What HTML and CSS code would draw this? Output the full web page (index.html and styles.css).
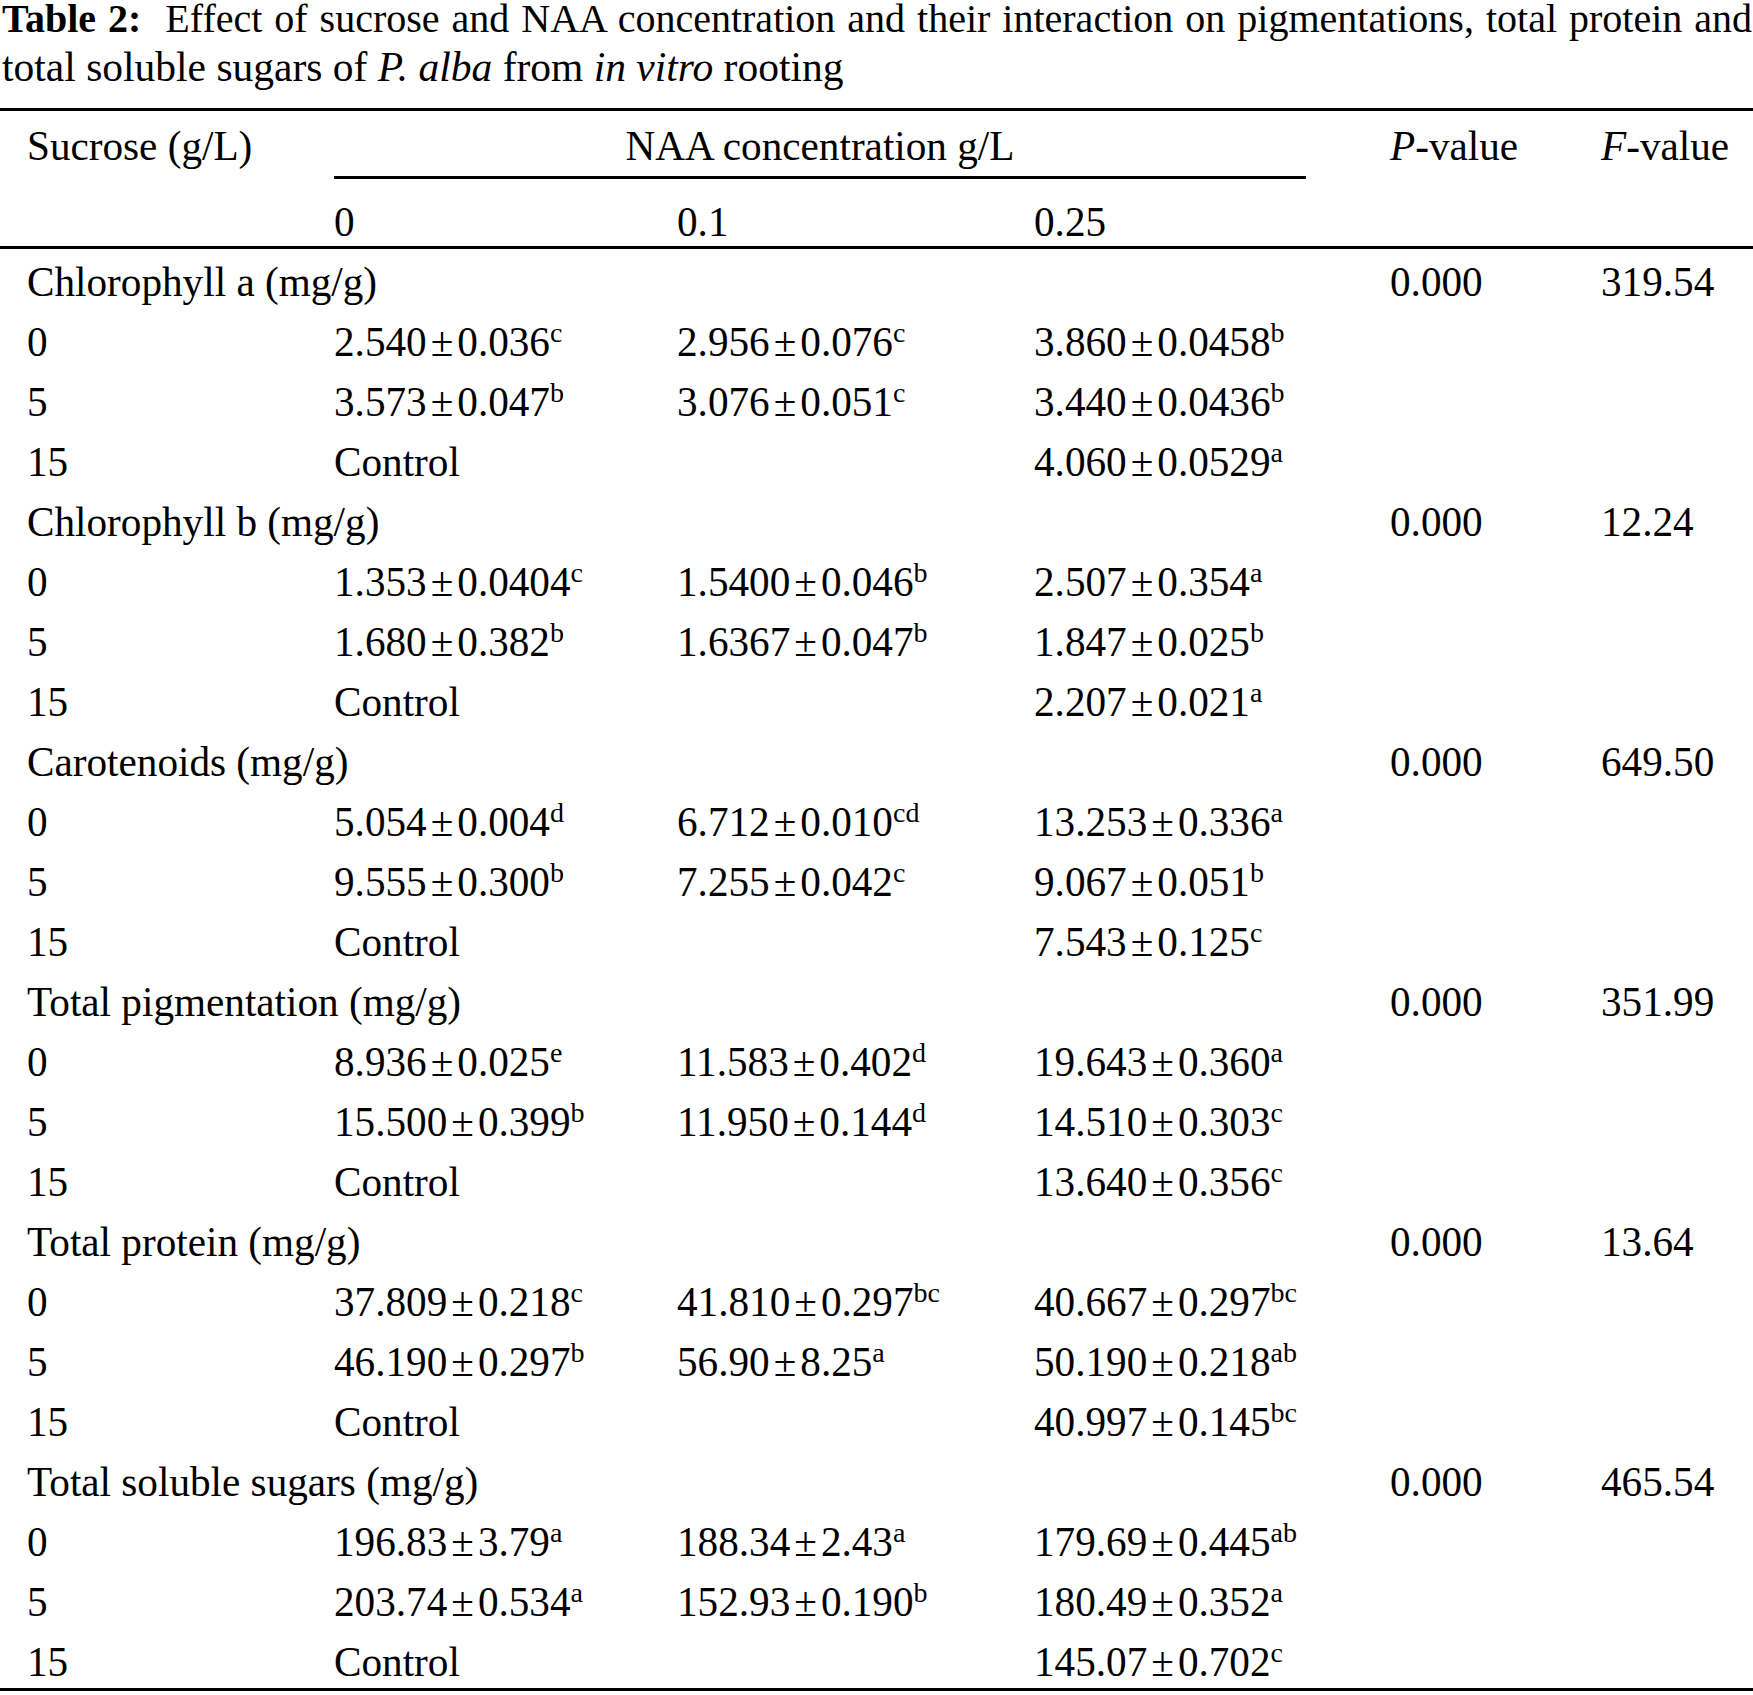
FILE: index.html
```html
<!DOCTYPE html>
<html lang="en">
<head>
<meta charset="utf-8">
<title>Table 2</title>
<link rel="stylesheet" href="styles.css">
</head>
<body>
<div class="page">
  <p class="caption"><span class="cap-line first"><b>Table 2:</b>&nbsp; Effect of sucrose and NAA concentration and their interaction on pigmentations, total protein and</span> <span class="cap-line second">total soluble sugars of <i>P. alba</i> from <i>in vitro</i> rooting</span></p>
  <table class="data">
    <colgroup>
      <col class="c0"><col class="c1"><col class="c2"><col class="c3"><col class="c4"><col class="c5">
    </colgroup>
    <thead>
      <tr class="h1">
        <th class="first-col">Sucrose (g/L)</th>
        <th colspan="3"><div class="naa">NAA concentration g/L</div></th>
        <th><i>P</i>-value</th>
        <th><i>F</i>-value</th>
      </tr>
      <tr class="h2">
        <th class="first-col"></th>
        <th>0</th>
        <th>0.1</th>
        <th>0.25</th>
        <th></th>
        <th></th>
      </tr>
    </thead>
    <tbody>
      <tr class="top"><td class="first-col" colspan="4">Chlorophyll a (mg/g)</td><td>0.000</td><td>319.54</td></tr>
      <tr><td class="first-col">0</td><td>2.540<span class="pm">±</span>0.036<sup>c</sup></td><td>2.956<span class="pm">±</span>0.076<sup>c</sup></td><td>3.860<span class="pm">±</span>0.0458<sup>b</sup></td><td></td><td></td></tr>
      <tr><td class="first-col">5</td><td>3.573<span class="pm">±</span>0.047<sup>b</sup></td><td>3.076<span class="pm">±</span>0.051<sup>c</sup></td><td>3.440<span class="pm">±</span>0.0436<sup>b</sup></td><td></td><td></td></tr>
      <tr><td class="first-col">15</td><td>Control</td><td></td><td>4.060<span class="pm">±</span>0.0529<sup>a</sup></td><td></td><td></td></tr>

      <tr><td class="first-col" colspan="4">Chlorophyll b (mg/g)</td><td>0.000</td><td>12.24</td></tr>
      <tr><td class="first-col">0</td><td>1.353<span class="pm">±</span>0.0404<sup>c</sup></td><td>1.5400<span class="pm">±</span>0.046<sup>b</sup></td><td>2.507<span class="pm">±</span>0.354<sup>a</sup></td><td></td><td></td></tr>
      <tr><td class="first-col">5</td><td>1.680<span class="pm">±</span>0.382<sup>b</sup></td><td>1.6367<span class="pm">±</span>0.047<sup>b</sup></td><td>1.847<span class="pm">±</span>0.025<sup>b</sup></td><td></td><td></td></tr>
      <tr><td class="first-col">15</td><td>Control</td><td></td><td>2.207<span class="pm">±</span>0.021<sup>a</sup></td><td></td><td></td></tr>

      <tr><td class="first-col" colspan="4">Carotenoids (mg/g)</td><td>0.000</td><td>649.50</td></tr>
      <tr><td class="first-col">0</td><td>5.054<span class="pm">±</span>0.004<sup>d</sup></td><td>6.712<span class="pm">±</span>0.010<sup>cd</sup></td><td>13.253<span class="pm">±</span>0.336<sup>a</sup></td><td></td><td></td></tr>
      <tr><td class="first-col">5</td><td>9.555<span class="pm">±</span>0.300<sup>b</sup></td><td>7.255<span class="pm">±</span>0.042<sup>c</sup></td><td>9.067<span class="pm">±</span>0.051<sup>b</sup></td><td></td><td></td></tr>
      <tr><td class="first-col">15</td><td>Control</td><td></td><td>7.543<span class="pm">±</span>0.125<sup>c</sup></td><td></td><td></td></tr>

      <tr><td class="first-col" colspan="4">Total pigmentation (mg/g)</td><td>0.000</td><td>351.99</td></tr>
      <tr><td class="first-col">0</td><td>8.936<span class="pm">±</span>0.025<sup>e</sup></td><td>11.583<span class="pm">±</span>0.402<sup>d</sup></td><td>19.643<span class="pm">±</span>0.360<sup>a</sup></td><td></td><td></td></tr>
      <tr><td class="first-col">5</td><td>15.500<span class="pm">±</span>0.399<sup>b</sup></td><td>11.950<span class="pm">±</span>0.144<sup>d</sup></td><td>14.510<span class="pm">±</span>0.303<sup>c</sup></td><td></td><td></td></tr>
      <tr><td class="first-col">15</td><td>Control</td><td></td><td>13.640<span class="pm">±</span>0.356<sup>c</sup></td><td></td><td></td></tr>

      <tr><td class="first-col" colspan="4">Total protein (mg/g)</td><td>0.000</td><td>13.64</td></tr>
      <tr><td class="first-col">0</td><td>37.809<span class="pm">±</span>0.218<sup>c</sup></td><td>41.810<span class="pm">±</span>0.297<sup>bc</sup></td><td>40.667<span class="pm">±</span>0.297<sup>bc</sup></td><td></td><td></td></tr>
      <tr><td class="first-col">5</td><td>46.190<span class="pm">±</span>0.297<sup>b</sup></td><td>56.90<span class="pm">±</span>8.25<sup>a</sup></td><td>50.190<span class="pm">±</span>0.218<sup>ab</sup></td><td></td><td></td></tr>
      <tr><td class="first-col">15</td><td>Control</td><td></td><td>40.997<span class="pm">±</span>0.145<sup>bc</sup></td><td></td><td></td></tr>

      <tr><td class="first-col" colspan="4">Total soluble sugars (mg/g)</td><td>0.000</td><td>465.54</td></tr>
      <tr><td class="first-col">0</td><td>196.83<span class="pm">±</span>3.79<sup>a</sup></td><td>188.34<span class="pm">±</span>2.43<sup>a</sup></td><td>179.69<span class="pm">±</span>0.445<sup>ab</sup></td><td></td><td></td></tr>
      <tr><td class="first-col">5</td><td>203.74<span class="pm">±</span>0.534<sup>a</sup></td><td>152.93<span class="pm">±</span>0.190<sup>b</sup></td><td>180.49<span class="pm">±</span>0.352<sup>a</sup></td><td></td><td></td></tr>
      <tr class="last"><td class="first-col">15</td><td>Control</td><td></td><td>145.07<span class="pm">±</span>0.702<sup>c</sup></td><td></td><td></td></tr>
    </tbody>
  </table>
</div>
</body>
</html>
```

FILE: styles.css
```css
html, body {
  margin: 0;
  padding: 0;
  background: #fff;
}

body {
  font-family: "Liberation Serif", "Times New Roman", serif;
  color: #000;
}

.page {
  width: 1753px;
}

.caption {
  margin: 0 0 0 2px;
  width: 1750px;
}

.cap-line {
  display: block;
}

.cap-line.first {
  font-size: 40px;
  line-height: 38px;
  text-align: justify;
  text-align-last: justify;
}

.cap-line.second {
  font-size: 41.5px;
  line-height: 48px;
  padding-top: 5px;
}

.caption b {
  font-weight: bold;
}

.data {
  margin-top: 17px;
  width: 1753px;
  table-layout: fixed;
  border-collapse: separate;
  border-spacing: 0;
  font-size: 41.2px;
}

.c0 { width: 334px; }
.c1 { width: 343px; }
.c2 { width: 357px; }
.c3 { width: 356px; }
.c4 { width: 211px; }
.c5 { width: 152px; }

.data th,
.data td {
  padding: 0;
  text-align: left;
  vertical-align: top;
  font-weight: normal;
  white-space: nowrap;
  line-height: 60px;
}

.data .first-col {
  padding-left: 27px;
}

.h1 th {
  border-top: 3px solid #000;
  padding-top: 5px;
}

.naa {
  margin-right: 84px;
  border-bottom: 3px solid #000;
  text-align: center;
}

.h2 th {
  padding-top: 19px;
  line-height: 48px;
  border-bottom: 3px solid #000;
}

.top td {
  padding-top: 3px;
}

.last td {
  padding-top: 6px;
  padding-bottom: 2px;
  line-height: 48px;
  border-bottom: 3px solid #000;
}

.pm {
  margin: 0 4px;
}

sup {
  font-size: 28px;
  line-height: 0;
  vertical-align: 14px;
}
```
